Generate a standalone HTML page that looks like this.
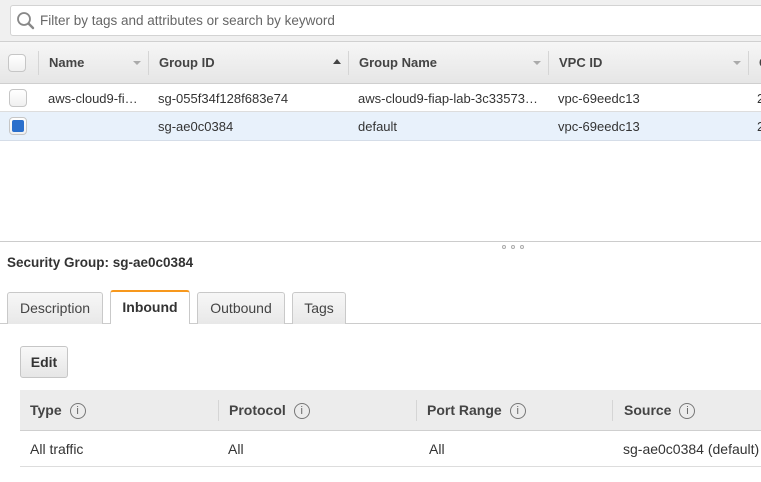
<!DOCTYPE html>
<html><head><style>
*{margin:0;padding:0;box-sizing:border-box}
body{width:761px;height:482px;overflow:hidden;background:#fff;font-family:"Liberation Sans",Arial,sans-serif;font-size:13px;color:#333;position:relative}
.a{position:absolute}
.cb{position:absolute;width:18px;height:18px;border:1px solid #c6c6c6;border-radius:4px;background:linear-gradient(#fff,#f0f0f0)}
.hd{font-weight:bold;color:#444}
.sep{position:absolute;width:1px;background:#d5d5d5}
.caret{position:absolute;width:0;height:0;border-left:4px solid transparent;border-right:4px solid transparent;border-top:4px solid #aaa}
.tab{position:absolute;top:292px;height:32px;border:1px solid #c9c9c9;border-bottom:none;border-radius:3px 3px 0 0;background:linear-gradient(#f7f7f7,#e8e8e8);font-size:14px;color:#444;text-align:center;line-height:31px}
.i{display:inline-block;width:16px;height:16px;border:1px solid #777;border-radius:50%;font-size:11px;line-height:14px;text-align:center;font-weight:normal;color:#666;margin-left:8px;vertical-align:middle;position:relative;top:0px}
.th{position:absolute;top:402px;font-size:14px;font-weight:bold;color:#444}
.td{position:absolute;top:441px;font-size:14px;color:#333}
.dot{position:absolute;top:245px;width:4px;height:4px;border:1px solid #aaa;border-radius:50%}
</style></head><body>
<div class="a" style="left:0;top:0;width:761px;height:42px;background:#f0f0f0;border-bottom:1px solid #d0d0d0"></div>
<div class="a" style="left:10px;top:5px;width:760px;height:31px;background:#fff;border:1px solid #d3d3d3;border-radius:3px"></div>
<svg class="a" style="left:16px;top:11px" width="20" height="20" viewBox="0 0 20 20"><circle cx="8" cy="8" r="6" fill="none" stroke="#888" stroke-width="1.8"/><line x1="12.5" y1="12.5" x2="17" y2="17" stroke="#888" stroke-width="2.4" stroke-linecap="round"/></svg>
<div class="a" style="left:40px;top:13px;color:#666;font-size:13.5px">Filter by tags and attributes or search by keyword</div>
<div class="a" style="left:0;top:42px;width:761px;height:42px;background:linear-gradient(#f6f6f6,#e6e6e6);border-bottom:1px solid #cfcfcf"></div>
<div class="cb" style="left:8px;top:54px"></div>
<div class="sep" style="left:38px;top:51px;height:24px"></div>
<div class="sep" style="left:148px;top:51px;height:24px"></div>
<div class="sep" style="left:348px;top:51px;height:24px"></div>
<div class="sep" style="left:548px;top:51px;height:24px"></div>
<div class="sep" style="left:748px;top:51px;height:24px"></div>
<div class="a hd" style="left:49px;top:55px">Name</div><div class="caret" style="left:133px;top:61px"></div>
<div class="a hd" style="left:159px;top:55px">Group ID</div><div class="a" style="left:333px;top:59px;border-left:4px solid transparent;border-right:4px solid transparent;border-bottom:5px solid #444"></div>
<div class="a hd" style="left:359px;top:55px">Group Name</div><div class="caret" style="left:533px;top:61px"></div>
<div class="a hd" style="left:559px;top:55px">VPC ID</div><div class="caret" style="left:733px;top:61px"></div>
<div class="a hd" style="left:759px;top:55px">G</div>
<div class="a" style="left:0;top:84px;width:761px;height:28px;border-bottom:1px solid #ddd"></div>
<div class="cb" style="left:9px;top:89px"></div>
<div class="a" style="left:48px;top:91px">aws-cloud9-fi…</div>
<div class="a" style="left:158px;top:91px">sg-055f34f128f683e74</div>
<div class="a" style="left:358px;top:91px">aws-cloud9-fiap-lab-3c33573…</div>
<div class="a" style="left:558px;top:91px">vpc-69eedc13</div>
<div class="a" style="left:757px;top:91px">2</div>
<div class="a" style="left:0;top:112px;width:761px;height:29px;background:#e8f1fb;border-bottom:1px solid #d5dde8"></div>
<div class="cb" style="left:9px;top:117px;padding:2px"><div style="width:12px;height:12px;background:#2a6fcc;border-radius:2px"></div></div>
<div class="a" style="left:158px;top:119px">sg-ae0c0384</div>
<div class="a" style="left:358px;top:119px">default</div>
<div class="a" style="left:558px;top:119px">vpc-69eedc13</div>
<div class="a" style="left:757px;top:119px">2</div>
<div class="a" style="left:0;top:241px;width:761px;height:1px;background:#ccc"></div>
<div class="dot" style="left:502px"></div><div class="dot" style="left:511px"></div><div class="dot" style="left:520px"></div>
<div class="a" style="left:7px;top:255px;font-weight:bold;font-size:13.5px;color:#333">Security Group: sg-ae0c0384</div>
<div class="a" style="left:0;top:323px;width:761px;height:1px;background:#ccc"></div>
<div class="tab" style="left:7px;width:96px">Description</div>
<div class="tab" style="left:110px;width:80px;top:290px;height:34px;background:#fff;border-top:2px solid #f7981d;font-weight:bold;color:#333">Inbound</div>
<div class="tab" style="left:197px;width:88px">Outbound</div>
<div class="tab" style="left:292px;width:54px">Tags</div>
<div class="a" style="left:20px;top:346px;width:48px;height:32px;border:1px solid #c6c6c6;border-radius:3px;background:linear-gradient(#f8f8f8,#e6e6e6);font-weight:bold;font-size:14px;text-align:center;line-height:30px;color:#333">Edit</div>
<div class="a" style="left:20px;top:390px;width:741px;height:41px;background:#ececec;border-bottom:1px solid #cfcfcf"></div>
<div class="sep" style="left:218px;top:400px;height:21px"></div>
<div class="sep" style="left:416px;top:400px;height:21px"></div>
<div class="sep" style="left:612px;top:400px;height:21px"></div>
<div class="th" style="left:30px">Type<span class="i">i</span></div>
<div class="th" style="left:229px">Protocol<span class="i">i</span></div>
<div class="th" style="left:427px">Port Range<span class="i">i</span></div>
<div class="th" style="left:624px">Source<span class="i">i</span></div>
<div class="td" style="left:30px">All traffic</div>
<div class="td" style="left:228px">All</div>
<div class="td" style="left:429px">All</div>
<div class="td" style="left:623px">sg-ae0c0384 (default)</div>
<div class="a" style="left:20px;top:466px;width:741px;height:1px;background:#ddd"></div>
</body></html>
